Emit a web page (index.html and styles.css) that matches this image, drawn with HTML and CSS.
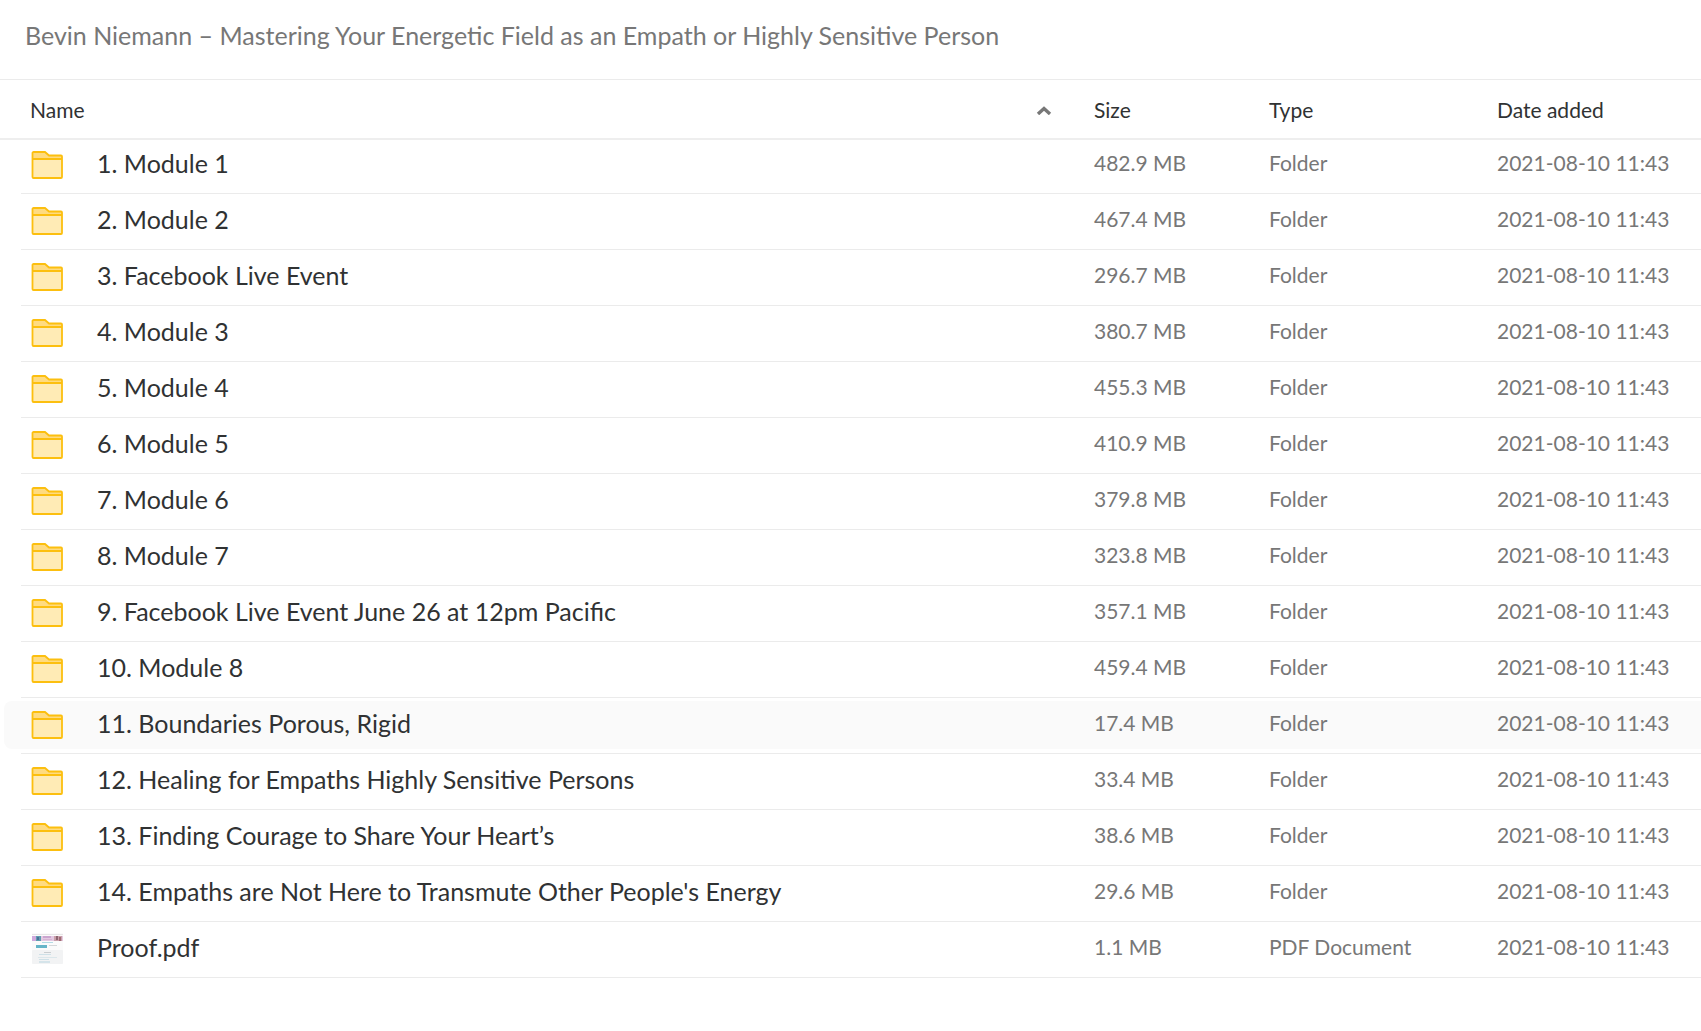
FILE: index.html
```html
<!DOCTYPE html>
<html lang="en">
<head>
    <meta charset="UTF-8">
    <meta name="viewport" content="width=device-width, initial-scale=1.0">
    <title>Bevin Niemann – Mastering Your Energetic Field</title>
    <link rel="stylesheet" href="styles.css">
</head>
<body>

    <!-- Shared icons -->
    <svg class="sprite" aria-hidden="true">
        <symbol id="folder" viewBox="0 0 32 32">
            <path d="M1.500 11V5a1 1 0 0 1 1-1H14l4 3h12a1 1 0 0 1 1 1V11z" fill="#ffdb80"/>
            <path d="M1.500 11h29.500v18a1 1 0 0 1-1 1H2.500a1 1 0 0 1-1-1z" fill="#ffebb5"/>
            <path d="M1.500 11h29.500M1.500 29V5a1 1 0 0 1 1-1H14l4 3.500h12a1 1 0 0 1 1 1v20.500a1 1 0 0 1-1 1H2.500a1 1 0 0 1-1-1z" fill="none" stroke="#fcbf0f" stroke-width="1.800"/>
        </symbol>
    </svg>

    <header class="page-header">
        <h1 class="title">Bevin Niemann – Mastering Your Energetic Field as an Empath or Highly Sensitive Person</h1>
    </header>

    <table class="files">
        <colgroup>
            <col>
            <col class="col-size">
            <col class="col-type">
            <col class="col-date">
        </colgroup>
        <thead>
            <tr>
                <th aria-sort="ascending">
                    <button type="button" class="sort">
                        Name
                        <svg class="arrow" viewBox="0 0 16 10" aria-hidden="true"><path d="M2 9l6-5.500L14 9" fill="none" stroke="#777" stroke-width="3.400"/></svg>
                    </button>
                </th>
                <th><button type="button" class="sort">Size</button></th>
                <th><button type="button" class="sort">Type</button></th>
                <th><button type="button" class="sort">Date added</button></th>
            </tr>
        </thead>
        <tbody id="rows"></tbody>
    </table>

    <template id="pdf-icon">
        <svg class="icon" viewBox="0 -1 32 32" aria-hidden="true">
            <rect x="1" width="31" height="31" fill="#fbfbfb"/>
            <rect x="1" y="1" width="31" height="1" fill="#e8e6e8"/>
            <rect x="1" y="3" width="31" height="5" fill="#e3c9e2"/>
            <rect x="1" y="3" width="4" height="5" fill="#cfa9dc"/>
            <rect x="5" y="3" width="5" height="5" fill="#5f9fb0"/>
            <rect x="6" y="4" width="2" height="3" fill="#4a6f9a"/>
            <rect x="12" y="3" width="8" height="2" fill="#cba5cf"/>
            <rect x="12" y="6" width="9" height="1" fill="#d7b3d4"/>
            <rect x="23" y="3" width="8" height="5" fill="#c9a0aa"/>
            <rect x="25" y="3" width="2" height="4" fill="#8d6470"/>
            <rect x="28" y="4" width="2" height="4" fill="#a06a75"/>
            <rect x="11" y="9" width="11" height="1" fill="#b5dbe5"/>
            <rect x="5" y="12" width="11" height="3" fill="#66b5c8"/>
            <rect x="18" y="12" width="8" height="1" fill="#d5d8da"/>
            <rect x="1" y="17" width="31" height="14" rx="1" fill="#f2f3f4"/>
            <rect x="13" y="19" width="7" height="1" fill="#c9cdd0"/>
            <rect x="8" y="21" width="12" height="1" fill="#cfe1e8"/>
            <rect x="7" y="24" width="19" height="1" fill="#dbe7eb"/>
            <rect x="8" y="26" width="10" height="1" fill="#cfe1e8"/>
            <rect x="8" y="28" width="11" height="2" fill="#d5e4ea"/>
        </svg>
    </template>

    <script>
        const DATE = "2021-08-10 11:43";

        const files = [
            ["1. Module 1", "482.9 MB"],
            ["2. Module 2", "467.4 MB"],
            ["3. Facebook Live Event", "296.7 MB"],
            ["4. Module 3", "380.7 MB"],
            ["5. Module 4", "455.3 MB"],
            ["6. Module 5", "410.9 MB"],
            ["7. Module 6", "379.8 MB"],
            ["8. Module 7", "323.8 MB"],
            ["9. Facebook Live Event June 26 at 12pm Pacific", "357.1 MB"],
            ["10. Module 8", "459.4 MB"],
            ["11. Boundaries Porous, Rigid", "17.4 MB", "Folder", true],
            ["12. Healing for Empaths Highly Sensitive Persons", "33.4 MB"],
            ["13. Finding Courage to Share Your Heart’s", "38.6 MB"],
            ["14. Empaths are Not Here to Transmute Other People's Energy", "29.6 MB"],
            ["Proof.pdf", "1.1 MB", "PDF Document"]
        ];

        const folderIcon = `<svg class="icon" aria-hidden="true"><use href="#folder"/></svg>`;
        const pdfIcon = document.getElementById("pdf-icon").innerHTML;

        document.getElementById("rows").innerHTML = files.map(([name, size, type = "Folder", active]) =>
            `<tr class="row${active ? " active" : ""}">
                <td><a class="file" href="#">${type === "Folder" ? folderIcon : pdfIcon}<span>${name}</span></a></td>
                <td>${size}</td>
                <td>${type}</td>
                <td>${DATE}</td>
            </tr>`
        ).join("");
    </script>

</body>
</html>
```
FILE: styles.css
```css
body {
    font-family: Lato, 'Liberation Sans', sans-serif;
    background: #fff;
    color: #303233;
    margin: 0;
}

.sprite {
    display: none;
}

/* Page header */
.page-header {
    padding: 19px 25px 28px;
    border-bottom: 1px solid #ebebeb;
}

.title {
    margin: 0;
    font-size: 25px;
    line-height: 32px;
    font-weight: 400;
    color: #777;
}

/* File table */
.files {
    width: 100%;
    table-layout: fixed;
    border-collapse: collapse;
    font-size: 21px;
    line-height: 28px;
}

.col-size {
    width: 175px;
}

.col-type {
    width: 228px;
}

.col-date {
    width: 204px;
}

th,
td {
    padding: 0;
    text-align: left;
    white-space: nowrap;
}

thead {
    box-shadow: 0 2px 0 #eee;
}

th {
    height: 58px;
    padding-top: 2px;
    box-sizing: border-box;
    font-weight: 400;
}

th:first-child {
    padding-left: 30px;
    padding-right: 42px;
}

.sort {
    display: flex;
    justify-content: space-between;
    align-items: center;
    width: 100%;
    padding: 0;
    border: 0;
    background: none;
    font: inherit;
    color: inherit;
    text-align: left;
    cursor: pointer;
}

.arrow {
    width: 16px;
    height: 10px;
}

/* Rows, with a separator inset from the left edge */
.row {
    position: relative;
    z-index: 0;
    height: 56px;
    color: #777;
    background: linear-gradient(#ebebeb, #ebebeb) 21px 100% / 100% 1px no-repeat;
}

.row td {
    padding-bottom: 7px;
}

.active td:first-child::before,
.row:hover td:first-child::before {
    content: "";
    position: absolute;
    z-index: -1;
    top: 3px;
    bottom: 5px;
    left: 4px;
    right: 0;
    border-radius: 8px 0 0 8px;
    background: #fafafa;
}

.file {
    display: flex;
    align-items: center;
    gap: 34px;
    padding-left: 31px;
    font-size: 25px;
    line-height: 32px;
    color: #303233;
    text-decoration: none;
}

.icon {
    width: 32px;
    height: 32px;
    margin-top: 3px;
    flex-shrink: 0;
}
```
